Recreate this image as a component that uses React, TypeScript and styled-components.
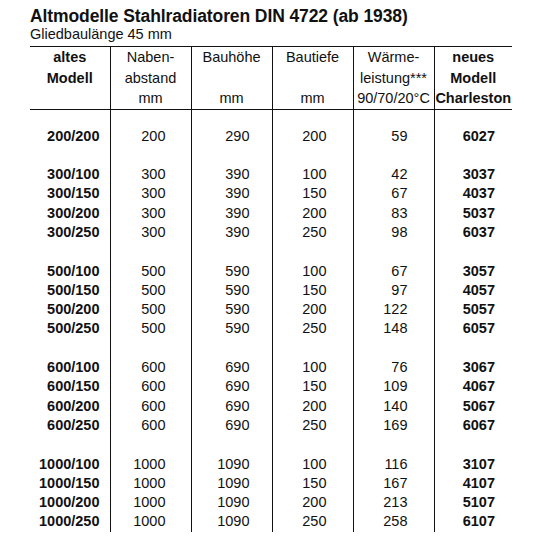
import React from 'react';
import styled, { createGlobalStyle } from 'styled-components';

const Global = createGlobalStyle`
  html, body { margin: 0; padding: 0; background: #fff; }
  body { font-family: "Liberation Sans", Arial, Helvetica, sans-serif; color: #111; }
`;

const Page = styled.div`
  width: 540px;
  height: 540px;
  box-sizing: border-box;
  padding: 6px 0 0 30px;
  overflow: hidden;
`;

const Title = styled.h1`
  margin: 0;
  font-size: 17.5px;
  line-height: 20px;
  font-weight: 700;
  letter-spacing: -0.1px;
`;

const Subtitle = styled.div`
  font-size: 14.5px;
  line-height: 16px;
`;

const Table = styled.table`
  margin-top: 4px;
  border-collapse: collapse;
  table-layout: fixed;
  width: 482px;
  font-size: 14.5px;
`;

const HeadCell = styled.th<{ $bold?: boolean; $first?: boolean }>`
  padding: 0;
  vertical-align: top;
  text-align: center;
  font-weight: ${(p) => (p.$bold ? 700 : 400)};
  border-top: 1px solid #111;
  border-bottom: 1px solid #111;
  border-left: ${(p) => (p.$first ? 'none' : '1px solid #111')};
  white-space: nowrap;
`;

const HeadLine = styled.div`
  height: 20.5px;
  line-height: 20.5px;
`;

const Cell = styled.td<{ $bold?: boolean; $first?: boolean; $pr: number; $h: number }>`
  padding: 0 ${(p) => p.$pr}px 0 0;
  height: ${(p) => p.$h}px;
  line-height: ${(p) => p.$h}px;
  text-align: right;
  font-weight: ${(p) => (p.$bold ? 700 : 400)};
  border-left: ${(p) => (p.$first ? 'none' : '1px solid #111')};
  white-space: nowrap;
`;

const widths = [80, 81, 81, 81, 81, 78];
const pads = [10, 25, 22, 26, 26, 17];
const bold = [true, false, false, false, false, true];

const headers: string[][] = [
  ['altes', 'Modell', ''],
  ['Naben-', 'abstand', 'mm'],
  ['Bauhöhe', '', 'mm'],
  ['Bautiefe', '', 'mm'],
  ['Wärme-', 'leistung***', '90/70/20°C'],
  ['neues', 'Modell', 'Charleston'],
];

type Row = string[] | null;

const rows: Row[] = [
  ['200/200', '200', '290', '200', '59', '6027'],
  null,
  ['300/100', '300', '390', '100', '42', '3037'],
  ['300/150', '300', '390', '150', '67', '4037'],
  ['300/200', '300', '390', '200', '83', '5037'],
  ['300/250', '300', '390', '250', '98', '6037'],
  null,
  ['500/100', '500', '590', '100', '67', '3057'],
  ['500/150', '500', '590', '150', '97', '4057'],
  ['500/200', '500', '590', '200', '122', '5057'],
  ['500/250', '500', '590', '250', '148', '6057'],
  null,
  ['600/100', '600', '690', '100', '76', '3067'],
  ['600/150', '600', '690', '150', '109', '4067'],
  ['600/200', '600', '690', '200', '140', '5067'],
  ['600/250', '600', '690', '250', '169', '6067'],
  null,
  ['1000/100', '1000', '1090', '100', '116', '3107'],
  ['1000/150', '1000', '1090', '150', '167', '4107'],
  ['1000/200', '1000', '1090', '200', '213', '5107'],
  ['1000/250', '1000', '1090', '250', '258', '6107'],
];

const ROW_H = 19.3;

export default function App() {
  return (
    <Page>
      <Global />
      <Title>Altmodelle Stahlradiatoren DIN 4722 (ab 1938)</Title>
      <Subtitle>Gliedbaulänge 45 mm</Subtitle>
      <Table>
        <colgroup>
          {widths.map((w, i) => (
            <col key={i} style={{ width: w }} />
          ))}
        </colgroup>
        <thead>
          <tr>
            {headers.map((lines, i) => (
              <HeadCell key={i} $bold={bold[i]} $first={i === 0}>
                {lines.map((l, j) => (
                  <HeadLine key={j}>{l || '\u00a0'}</HeadLine>
                ))}
              </HeadCell>
            ))}
          </tr>
        </thead>
        <tbody>
          <tr>
            {widths.map((_, i) => (
              <Cell key={i} $first={i === 0} $pr={pads[i]} $h={17} />
            ))}
          </tr>
          {rows.map((r, ri) => (
            <tr key={ri}>
              {widths.map((_, i) => (
                <Cell key={i} $first={i === 0} $pr={pads[i]} $h={ROW_H} $bold={bold[i]}>
                  {r ? r[i] : ''}
                </Cell>
              ))}
            </tr>
          ))}
        </tbody>
      </Table>
    </Page>
  );
}
